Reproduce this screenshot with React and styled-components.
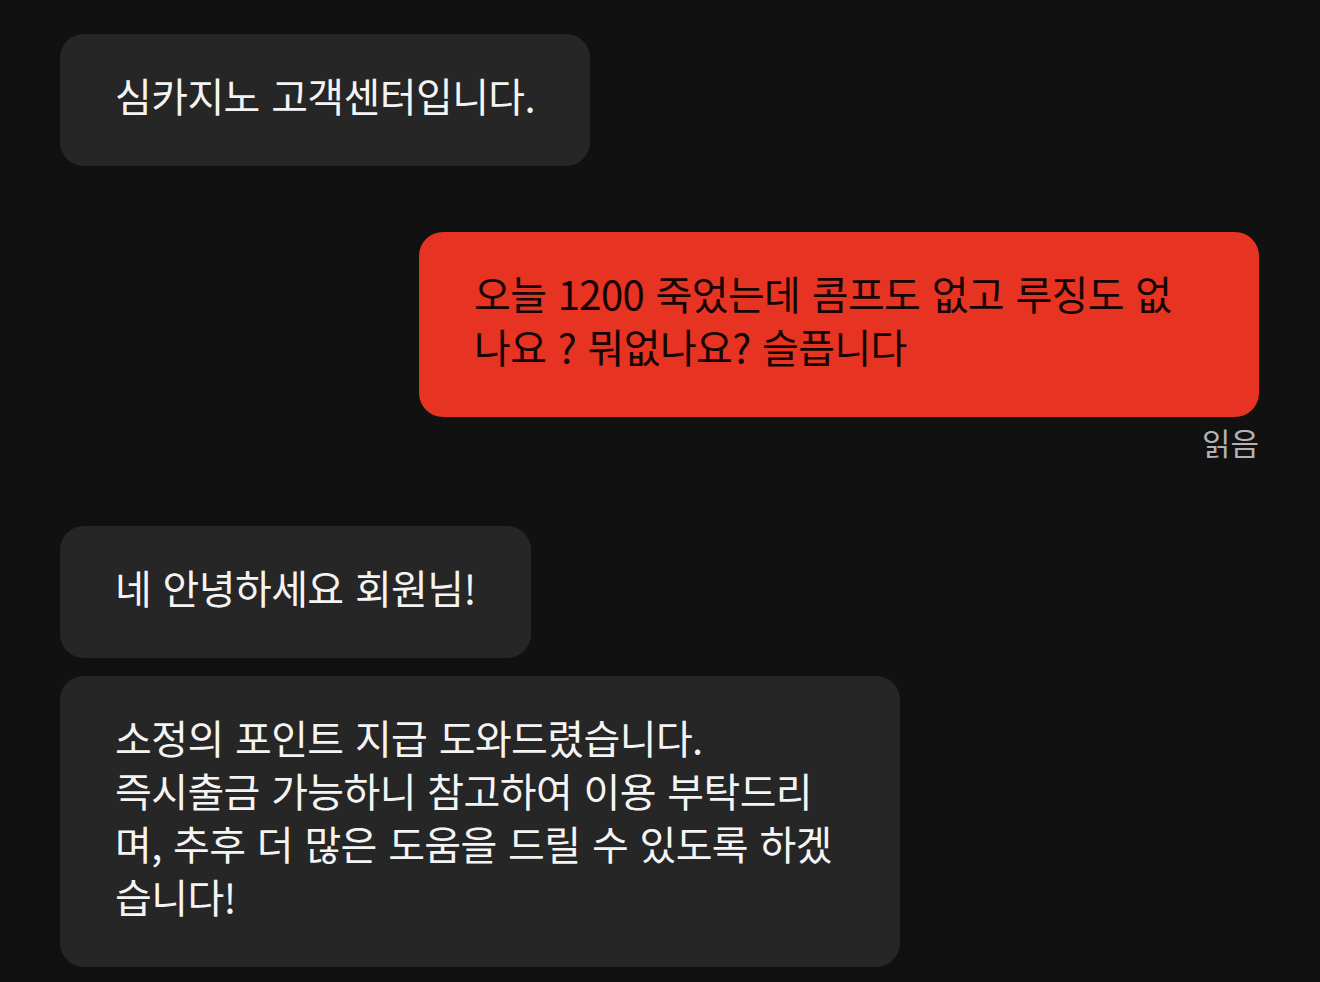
import React from "react";
import styled, { createGlobalStyle } from "styled-components";

const GlobalStyle = createGlobalStyle`
  html, body {
    margin: 0;
    background: #111111;
  }

  body {
    font-family: "Noto Sans CJK KR", "Noto Sans", sans-serif;
    -webkit-font-smoothing: antialiased;
  }
`;

const MESSAGES = [
  { id: 1, mine: false, gap: 0, text: "심카지노 고객센터입니다." },
  {
    id: 2,
    mine: true,
    gap: 66,
    wide: true,
    read: true,
    text: "오늘 1200 죽었는데 콤프도 없고 루징도 없\n나요 ? 뭐없나요? 슬픕니다",
  },
  { id: 3, mine: false, gap: 64, text: "네 안녕하세요 회원님!" },
  {
    id: 4,
    mine: false,
    gap: 18,
    wide: true,
    text:
      "소정의 포인트 지급 도와드렸습니다.\n즉시출금 가능하니 참고하여 이용 부탁드리\n며, 추후 더 많은 도움을 드릴 수 있도록 하겠\n습니다!",
  },
];

function App() {
  return (
    <>
      <GlobalStyle />
      <Thread>
        {MESSAGES.map((msg) => (
          <MessageGroup key={msg.id} $mine={msg.mine} $gap={msg.gap}>
            <Bubble $mine={msg.mine} $wide={msg.wide}>
              {msg.text}
            </Bubble>
            {msg.read && <ReadMark>읽음</ReadMark>}
          </MessageGroup>
        ))}
      </Thread>
    </>
  );
}

const Thread = styled.main`
  display: flex;
  flex-direction: column;
  padding: 34px 61px 0 60px;
  min-height: 982px;
  box-sizing: border-box;
`;

const MessageGroup = styled.div`
  display: flex;
  flex-direction: column;
  align-items: ${(p) => (p.$mine ? "flex-end" : "flex-start")};
  margin-top: ${(p) => p.$gap}px;
`;

const Bubble = styled.div`
  box-sizing: border-box;
  width: ${(p) => (p.$wide ? "840px" : "auto")};
  padding: 35px 55px 44px;
  border-radius: 24px;
  background: ${(p) => (p.$mine ? "#e63322" : "#262626")};
  color: ${(p) => (p.$mine ? "#150504" : "#f4f4f4")};
  font-size: 40px;
  line-height: 53px;
  letter-spacing: -0.6px;
  word-spacing: 3px;
  white-space: pre;
`;

const ReadMark = styled.span`
  margin-top: 5px;
  color: #b2b2b2;
  font-size: 31px;
  line-height: 40px;
`;

export default App;
